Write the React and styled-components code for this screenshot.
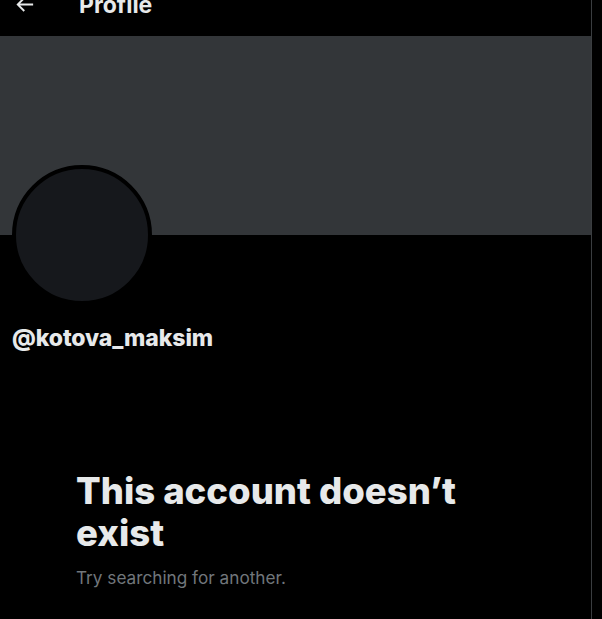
import styled, { createGlobalStyle } from 'styled-components';

const GlobalStyle = createGlobalStyle`
  html, body {
    margin: 0;
    padding: 0;
    background: #000;
  }
  body {
    font-family: Inter, "Noto Sans", "Liberation Sans", sans-serif;
    color: #e7e9ea;
    overflow: hidden;
  }
`;

const Page = styled.div`
  display: flex;
  height: 619px;
  background: #000;
`;

const Column = styled.main`
  width: 591px;
  border-right: 1px solid #3a3d40;
  display: flex;
  flex-direction: column;
  overflow: hidden;
`;

const Header = styled.header`
  display: flex;
  align-items: center;
  flex-shrink: 0;
  height: 62px;
  margin-top: -26px;
  padding: 0 13px;
  gap: 43px;
`;

const BackButton = styled.button`
  display: flex;
  align-items: center;
  justify-content: center;
  width: 23px;
  height: 23px;
  padding: 0;
  border: none;
  background: none;
  color: #e7e9ea;
  margin-top: -2px;
`;

const Title = styled.h2`
  margin: 0;
  font-size: 23px;
  font-weight: 700;
  line-height: 28px;
`;

const Banner = styled.div`
  flex-shrink: 0;
  height: 199px;
  background: #333639;
`;

const ProfileInfo = styled.div`
  padding: 0 12px;
  display: flex;
  flex-direction: column;
`;

const Avatar = styled.div`
  width: 132px;
  height: 132px;
  margin-top: -70px;
  border-radius: 50%;
  border: 4px solid #000;
  background: #16181c;
`;

const Handle = styled.div`
  margin-top: 19px;
  font-size: 23px;
  font-weight: 800;
  line-height: 28px;
  letter-spacing: -0.1px;
`;

const Empty = styled.section`
  padding: 118px 40px 0 76px;
`;

const EmptyTitle = styled.h1`
  margin: 0;
  font-size: 36.5px;
  font-weight: 800;
  line-height: 42px;
  max-width: 420px;
`;

const EmptyText = styled.p`
  margin: 12px 0 0;
  font-size: 17.2px;
  line-height: 23px;
  color: #71767b;
`;

export default function App() {
  return (
    <>
      <GlobalStyle />
      <Page>
        <Column>
          <Header>
            <BackButton aria-label="Back">
              <svg viewBox="0 0 24 24" width="23" height="23" fill="currentColor">
                <path d="M7.414 13l5.043 5.04-1.414 1.42L3.586 12l7.457-7.46 1.414 1.42L7.414 11H21v2H7.414z" />
              </svg>
            </BackButton>
            <Title>Profile</Title>
          </Header>
          <Banner />
          <ProfileInfo>
            <Avatar />
            <Handle>@kotova_maksim</Handle>
          </ProfileInfo>
          <Empty>
            <EmptyTitle>This account doesn’t exist</EmptyTitle>
            <EmptyText>Try searching for another.</EmptyText>
          </Empty>
        </Column>
      </Page>
    </>
  );
}
